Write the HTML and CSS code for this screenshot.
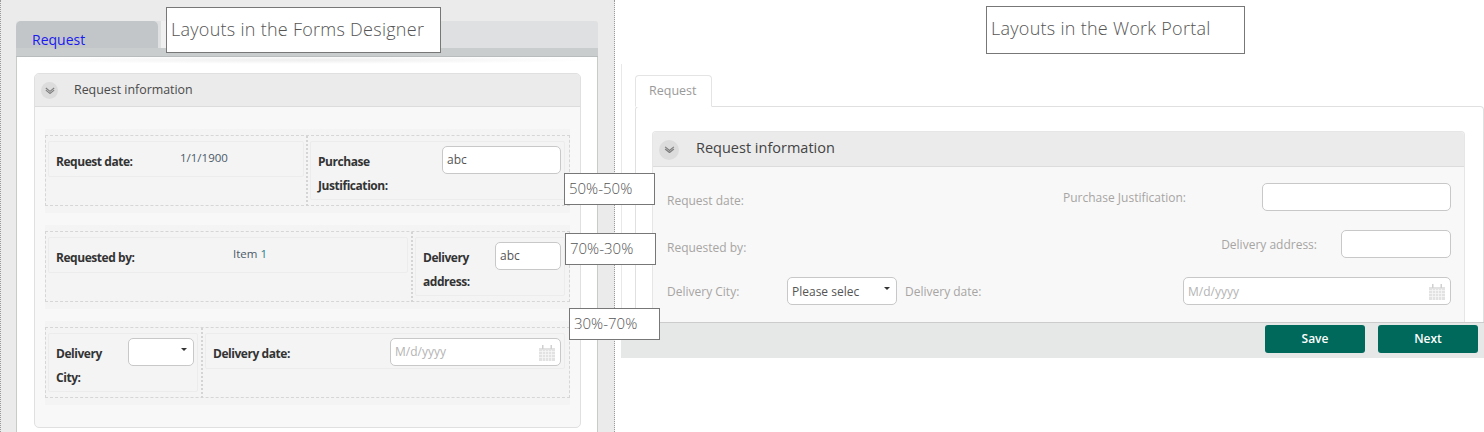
FILE: index.html
```html
<!DOCTYPE html>
<html lang="en">
<head>
<meta charset="utf-8">
<title>Layouts</title>
<link rel="stylesheet" href="styles.css">
</head>
<body>
<svg class="defs" width="0" height="0" aria-hidden="true">
  <symbol id="chev" viewBox="0 0 12 8"><path d="M1 1l5 4 5-4M1 3.500l5 4 5-4" fill="none" stroke="#7d7d7d" stroke-width="1.400"/></symbol>
  <symbol id="cal" viewBox="0 0 16 16">
    <path d="M0 3h16v13H0z" fill="#e2e2e2"/>
    <path d="M3 0h1.500v4H3zM11.500 0H13v4h-1.500z" fill="#d0d0d0"/>
    <path d="M0 6.500h16M0 9.500h16M0 12.500h16M3.500 5v11M6.500 5v11M9.500 5v11M12.500 5v11" stroke="#f6f6f6" stroke-width=".8"/>
  </symbol>
</svg>
<div class="page">
  <section class="designer">
    <div class="d-card">
      <div class="d-tabs">
        <div class="d-tab">Request</div>
        <div class="d-tab-ghost"></div>
      </div>
      <div class="d-bar"></div>
      <div class="d-sheet">
        <div class="d-panel">
          <div class="p-head d-head">
            <span class="toggle"><svg class="chev"><use href="#chev"/></svg></span>
            <span class="p-title">Request information</span>
          </div>
          <div class="d-body">
            <div class="band">
              <div class="dash c50">
                <div class="cell short"><b class="lbl">Request date:</b><span class="val v-date">1/1/1900</span></div>
                <div class="cell"><b class="lbl w-a">Purchase Justification:</b><span class="inp i-a">abc</span></div>
              </div>
            </div>
            <div class="band">
              <div class="dash c70">
                <div class="cell short"><b class="lbl">Requested by:</b><span class="val v-item">Item <i class="num">1</i></span></div>
                <div class="cell"><b class="lbl w-b">Delivery address:</b><span class="inp i-b">abc</span></div>
              </div>
            </div>
            <div class="band">
              <div class="dash c30">
                <div class="cell"><b class="lbl w-c">Delivery City:</b><span class="inp i-c"><span class="caret"></span></span></div>
                <div class="cell short"><b class="lbl">Delivery date:</b><span class="inp i-d ph">M/d/yyyy<svg class="cal"><use href="#cal"/></svg></span></div>
              </div>
            </div>
          </div>
        </div>
      </div>
    </div>
  </section>
  <section class="portal">
    <div class="w-main">
      <div class="w-tab">Request</div>
      <div class="w-box">
        <div class="w-panel">
          <div class="p-head w-head">
            <span class="toggle"><svg class="chev"><use href="#chev"/></svg></span>
            <span class="p-title">Request information</span>
          </div>
          <div class="w-body">
            <div class="w-row r1">
              <span class="w-lbl l-low">Request date:</span>
              <span class="w-lbl">Purchase Justification:</span>
              <span class="w-inp w1"></span>
            </div>
            <div class="w-row r2">
              <span class="w-lbl l-low">Requested by:</span>
              <span class="w-lbl">Delivery address:</span>
              <span class="w-inp w2"></span>
            </div>
            <div class="w-row r3">
              <span class="w-lbl l-city">Delivery City:</span>
              <span class="w-inp w3">Please selec<span class="caret"></span></span>
              <span class="w-lbl l-date">Delivery date:</span>
              <span class="w-inp w4 ph">M/d/yyyy<svg class="cal"><use href="#cal"/></svg></span>
            </div>
          </div>
        </div>
      </div>
    </div>
    <div class="w-foot">
      <span class="btn">Save</span>
      <span class="btn">Next</span>
    </div>
  </section>
  <div class="call t1">Layouts in the Forms Designer</div>
  <div class="call t2">Layouts in the Work Portal</div>
  <div class="call pct p1">50%-50%</div>
  <div class="call pct p2">70%-30%</div>
  <div class="call pct p3">30%-70%</div>
</div>
</body>
</html>
```
FILE: styles.css
```css
* { box-sizing: border-box; }
html, body { margin: 0; height: 100%; background: #fff; }
body { overflow: hidden; font-family: "Open Sans", "Liberation Sans", sans-serif; }
.defs { position: absolute; }
.page { position: relative; display: flex; width: 1484px; height: 432px; overflow: hidden; }

/* Forms Designer */
.designer {
  width: 615px; height: 432px; flex: none; padding: 21px 16px 0 15px;
  background: #ebebeb;
  border-left: 1px dotted #9a9a9a; border-right: 1px dotted #9a9a9a;
}
.d-card { height: 411px; }
.d-tabs { display: flex; height: 27px; background: #dfe0e1; border-radius: 3px 3px 0 0; }
.d-tab {
  width: 142px; height: 27px; padding: 9px 0 0 16px; background: #c3c6c8;
  border-radius: 5px 5px 0 0; color: #1a1aee; font-size: 14px; line-height: 19px;
}
.d-tab-ghost { width: 60px; margin-left: 3px; background: #f0f0f0; }
.d-bar { height: 9px; background: #c9cdcd; border-bottom: 1px solid #b9bcbc; }
.d-sheet {
  height: 375px; padding: 16px 16px 0 17px;
  background: radial-gradient(ellipse 50% 4px at 50% 3px, #eeeeee, rgba(255, 255, 255, 0)) #fff;
  border-left: 1px solid #c8cbc8; border-right: 1px solid #c8cbc8;
}
.d-panel { height: 355px; border: 1px solid #e0e0e0; border-radius: 5px; background: #f8f8f8; }
.p-head { display: flex; align-items: center; background: #ebebeb; border-bottom: 1px solid #dcdcdc; border-radius: 4px 4px 0 0; color: #4a4a4a; }
.d-head { height: 33px; padding-left: 6px; font-size: 12.400px; gap: 16px; }
.d-head .p-title { margin-bottom: 2px; }
.toggle { display: flex; align-items: center; justify-content: center; width: 17px; height: 17px; border-radius: 50%; background: #dcdcdc; flex: none; }
.chev { width: 10px; height: 7px; }
.d-body { padding: 22px 10px 0 10px; display: flex; flex-direction: column; gap: 12px; }
.band { height: 84px; padding: 6px 0 7px; background: #f4f4f4; }
.dash { height: 71px; display: grid; border: 1px dashed #d6d6d6; padding: 5px 3px 5px 2px; column-gap: 6px; }
.c50 { grid-template-columns: 256px 255px; }
.c70 { grid-template-columns: 360px 150px; column-gap: 7px; }
.c30 { grid-template-columns: 150px 360px; column-gap: 7px; }
.cell {
  position: relative; display: flex; justify-content: space-between; align-items: flex-start;
  padding: 4px 3px 0 7px; border: 1px solid #ececec; border-radius: 2px; background: #f4f4f4; height: 59px;
}
.cell.short { height: 36px; }
.cell + .cell::before {
  content: ""; position: absolute; left: -5px; top: -6px; height: 70px; width: 2px;
  border-left: 2px dotted #d4d4d4;
}
.lbl { display: block; font-size: 12px; line-height: 24px; font-weight: 700; letter-spacing: -.45px; color: #333; margin-top: 4px; }
.w-a { width: 90px; }
.w-b { width: 60px; }
.w-c { width: 50px; }
.val { font-size: 11.500px; color: #4a5a68; line-height: 16px; position: absolute; top: 8px; }
.v-date { left: 131px; }
.v-item { left: 184px; }
.num { font-style: normal; color: #2c7a8c; }
.inp, .w-inp {
  position: relative; display: block; height: 28px; border: 1px solid #c8c8c8; border-radius: 5px; background: #fff;
  font-size: 12px; line-height: 26px; padding-left: 4px; color: #555; flex: none;
}
.i-a { width: 119px; }
.i-b { width: 66px; }
.i-c { width: 66px; }
.i-d { width: 171px; }
.ph { color: #b4b4b4; }
.cal { position: absolute; right: 5px; top: 6px; width: 16px; height: 16px; }
.caret { position: absolute; right: 6px; top: 9px; width: 0; height: 0; border: 3px solid transparent; border-top: 3px solid #333; border-bottom: 0; }

/* Work Portal */
.portal { flex: 1; display: flex; flex-direction: column; padding: 64px 0 0 6px; min-width: 0; }
.w-main { height: 258px; padding: 11px 0 0 13px; border-left: 1px solid #e8e8e8; }
.w-tab {
  width: 77px; height: 32px; margin-bottom: -1px; position: relative; z-index: 1; padding-left: 13px;
  border: 1px solid #e4e4e4; border-bottom-color: #fff; border-radius: 4px 4px 0 0; background: #fff;
  font-size: 12.500px; line-height: 29px; color: #9a9a9a;
}
.w-box { height: 216px; padding: 24px 18px 0 16px; border: 1px solid #e0e0e0; border-bottom: 0; border-radius: 4px 4px 0 0; }
.w-panel { height: 192px; background: #f8f8f8; border: 1px solid #e6e6e6; border-bottom: 0; border-radius: 4px 4px 0 0; }
.w-head { height: 35px; padding-left: 6px; gap: 17px; font-size: 14.500px; color: #444; }
.w-head .p-title { margin-bottom: 4px; }
.w-head .toggle { width: 20px; height: 20px; margin-top: 1px; }
.w-head .chev { width: 11px; height: 7px; }
.w-body { padding: 16px 13px 0 14px; }
.w-row { display: flex; align-items: flex-start; height: 47px; }
.w-lbl { font-size: 12px; line-height: 30px; color: #a7a5a3; }
.w-inp { line-height: 28px; }
.l-low { margin-top: 3px; margin-right: auto; }
.r1 .w-lbl:nth-child(2) { margin-right: 76px; }
.r2 .w-lbl:nth-child(2) { margin-right: 24px; }
.w1 { width: 189px; }
.w2 { width: 110px; }
.w3 { width: 110px; color: #555; }
.w4 { width: 268px; margin-left: auto; }
.l-city { width: 120px; }
.l-date { margin-left: 8px; }
.w-foot {
  height: 36px; display: flex; justify-content: flex-end; gap: 13px; padding: 2px 6px 0 0;
  background: #e6e7e7; border-top: 1px solid #ccc;
}
.btn {
  width: 100px; height: 28px; background: #00695c; border-radius: 3px; color: #fff;
  font-size: 12px; font-weight: 600; line-height: 28px; text-align: center;
}

/* Callouts */
.call { position: absolute; background: #fff; border: 1px solid #777; color: #555; font-weight: 300; white-space: nowrap; }
.t1 { left: 166px; top: 7px; width: 275px; height: 46px; padding-left: 4px; font-size: 18px; letter-spacing: .27px; line-height: 43px; }
.t2 { left: 986px; top: 6px; width: 259px; height: 48px; padding-left: 4px; font-size: 18px; letter-spacing: .27px; line-height: 43px; }
.pct { width: 91px; height: 32px; padding-left: 4px; font-size: 15px; line-height: 28px; }
.p1 { left: 564px; top: 173px; }
.p2 { left: 565px; top: 233px; }
.p3 { left: 569px; top: 308px; }
```
